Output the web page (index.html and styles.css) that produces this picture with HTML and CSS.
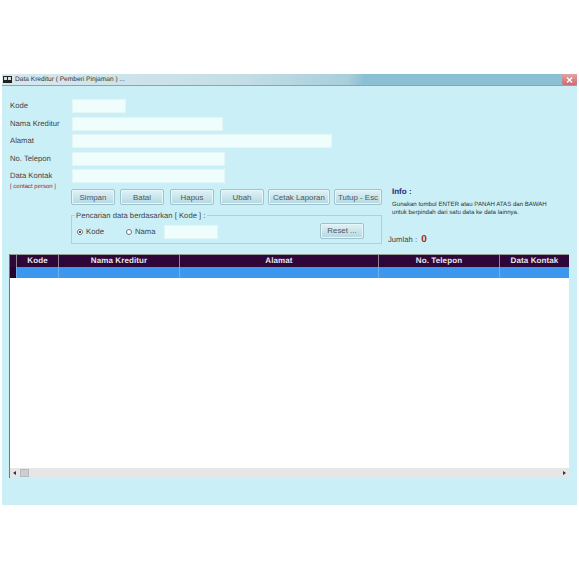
FILE: index.html
```
<!DOCTYPE html>
<html lang="en">

<head>
    <meta charset="UTF-8">
    <title>Data Kreditur</title>
    <link rel="stylesheet" href="styles.css">
</head>

<body>

    <div class="window">
        <div class="titlebar">
            <svg class="app-icon" width="9" height="7" viewBox="0 0 9 7">
                <rect width="9" height="7" fill="#222" />
                <rect x="1" y="1" width="3" height="3" fill="#ddd" />
                <rect x="5" y="1" width="3" height="3" fill="#ddd" />
            </svg>
            <span class="title">Data Kreditur ( Pemberi Pinjaman ) ...</span>
            <div class="close">
                <svg width="7" height="6" viewBox="0 0 7 6">
                    <path d="M1 0.5 L6 5.5 M6 0.5 L1 5.5" stroke="#fff" stroke-width="1.4" />
                </svg>
            </div>
        </div>

        <div class="content">
            <div class="form">
                <div class="row">
                    <label>Kode</label>
                    <div class="input w-kode"></div>
                </div>
                <div class="row">
                    <label>Nama Kreditur</label>
                    <div class="input w-nama"></div>
                </div>
                <div class="row">
                    <label>Alamat</label>
                    <div class="input w-alamat"></div>
                </div>
                <div class="row">
                    <label>No. Telepon</label>
                    <div class="input w-telp"></div>
                </div>
                <div class="row">
                    <label>Data Kontak</label>
                    <div class="input w-telp"></div>
                </div>
                <div class="contact-note">[ contact person ]</div>
            </div>

            <div class="middle">
                <div class="actions">
                    <div class="buttons">
                        <button class="w-44">Simpan</button>
                        <button class="w-44 gap-5">Batal</button>
                        <button class="w-44 gap-6">Hapus</button>
                        <button class="w-44 gap-6">Ubah</button>
                        <button class="w-62 gap-4">Cetak Laporan</button>
                        <button class="w-48 gap-4">Tutup - Esc</button>
                    </div>
                    <fieldset class="search">
                        <legend>Pencarian data berdasarkan [ Kode ] :</legend>
                        <span class="radio checked"></span>
                        <span class="radio-label label-kode">Kode</span>
                        <span class="radio"></span>
                        <span class="radio-label label-nama">Nama</span>
                        <div class="input w-cari"></div>
                        <button class="reset">Reset ...</button>
                    </fieldset>
                </div>
                <div class="info">
                    <div class="info-title">Info :</div>
                    <p>Gunakan tombol ENTER atau PANAH ATAS dan BAWAH<br>untuk berpindah dari satu data ke data lainnya.</p>
                    <div class="jumlah">Jumlah : <span class="count">0</span></div>
                </div>
            </div>

            <div class="grid">
                <div class="grid-head">
                    <div class="c-ind"></div>
                    <div class="c-kode">Kode</div>
                    <div class="c-nama">Nama Kreditur</div>
                    <div class="c-alamat">Alamat</div>
                    <div class="c-telp">No. Telepon</div>
                    <div class="c-kontak">Data Kontak</div>
                </div>
                <div class="grid-row">
                    <div class="c-ind"></div>
                    <div class="c-kode"></div>
                    <div class="c-nama"></div>
                    <div class="c-alamat"></div>
                    <div class="c-telp"></div>
                    <div class="c-kontak"></div>
                </div>
                <div class="grid-body"></div>
                <div class="scrollbar">
                    <span class="arrow left"></span>
                    <span class="thumb"></span>
                    <span class="arrow right"></span>
                </div>
            </div>
        </div>
    </div>

</body>

</html>
```
FILE: styles.css
```
html, body {
    margin: 0;
    padding: 0;
    background-color: #fff;
}

body {
    font-family: 'Liberation Sans', Arial, sans-serif;
    font-size: 7.7px;
    color: #333;
    padding-top: 74px;
    height: 505px;
    overflow: hidden;
    text-rendering: geometricPrecision;
}

.window {
    width: 575px;
    height: 431px;
    margin-left: 2px;
    background-color: #cbeff6;
    display: flex;
    flex-direction: column;
}

.titlebar {
    height: 11px;
    display: flex;
    align-items: center;
    flex: none;
    background: linear-gradient(100deg, #d8e8ec 0%, #c5dfe7 40%, #a9cfdc 60%, #8bbfd3 63%, #8bbfd3 100%);
    border-bottom: 1px solid #7fa9b9;
}

.app-icon {
    margin-left: 1px;
    margin-right: 3px;
}

.title {
    font-size: 6.6px;
    color: #333;
}

.close {
    width: 15px;
    height: 11px;
    margin-left: auto;
    background: linear-gradient(#e3a3a6, #cd6b70);
    border-radius: 0 0 2px 2px;
    display: flex;
    align-items: center;
    justify-content: center;
}

.content {
    flex: 1;
    padding: 13px 8px 0 8px;
}

.form {
    height: 90px;
}

.row {
    display: flex;
    align-items: center;
    height: 14px;
    margin-bottom: 3.5px;
}

.row label {
    width: 62px;
    margin-top: -1px;
    color: #444;
}

.input {
    height: 12px;
    background-color: #f0fdfd;
    border: 1px solid #e2f6f8;
    box-sizing: content-box;
}

.w-kode { width: 52px; }
.w-nama { width: 149px; }
.w-alamat { width: 258px; }
.w-telp { width: 151px; }
.w-cari { width: 52px; margin-left: 8px; }

.contact-note {
    font-size: 6px;
    color: #a52020;
    margin-top: -3px;
}

.middle {
    display: flex;
    height: 60px;
    margin-left: 61px;
}

.actions {
    width: 311px;
}

.buttons {
    display: flex;
}

button {
    font-family: inherit;
    font-size: 7.9px;
    color: #555;
    height: 16px;
    padding: 0;
    border: 1px solid #9fc2cd;
    border-radius: 2px;
    background: linear-gradient(#dff2f6, #b4d8e3);
    box-shadow: inset 0 0 0 1px #e6f6f9;
}

.w-44 { width: 44px; }
.w-62 { width: 62px; }
.w-48 { width: 48px; }
.gap-4 { margin-left: 4px; }
.gap-5 { margin-left: 5px; }
.gap-6 { margin-left: 6px; }

.search {
    margin: 6px 0 0 0;
    padding: 0 0 0 5px;
    height: 33px;
    box-sizing: border-box;
    border: 1px solid #b5cfd6;
    display: flex;
    align-items: center;
    width: 311px;
}

.search legend {
    padding: 0 1px;
    margin-left: -2px;
    color: #444;
}

.radio {
    width: 6px;
    height: 6px;
    border: 1px solid #777;
    border-radius: 50%;
    background-color: #fff;
    box-sizing: border-box;
    position: relative;
}

.radio.checked::after {
    content: "";
    position: absolute;
    left: 1px;
    top: 1px;
    width: 2px;
    height: 2px;
    border-radius: 50%;
    background-color: #222;
}

.radio-label {
    margin-left: 3px;
    color: #444;
}

.label-kode { width: 40px; }
.label-nama { width: 21px; }

.reset {
    width: 44px;
    margin-left: 102px;
    margin-top: -2px;
}

.info {
    margin-left: 6px;
    margin-top: -2px;
}

.info-title {
    font-size: 8px;
    font-weight: bold;
    color: #1c2a7c;
    margin-left: 4px;
}

.info p {
    font-size: 6.1px;
    line-height: 7.5px;
    margin: 5px 0 0 4px;
    color: #333;
    white-space: nowrap;
}

.jumlah {
    margin-top: 18px;
    color: #444;
}

.count {
    font-size: 10px;
    font-weight: bold;
    color: #a81c1c;
    margin-left: 2px;
}

.grid {
    width: 559px;
    height: 224px;
    display: flex;
    flex-direction: column;
    background-color: #fff;
    box-shadow: -1px 0 0 #6d7a80;
    margin-top: 5px;
}

.grid-head {
    display: flex;
    flex: none;
    height: 12px;
    background-color: #2e0638;
    border-top: 1px solid #9a9a9a;
    color: #e8e6ee;
    font-size: 8px;
    font-weight: bold;
    line-height: 12px;
    text-align: center;
    letter-spacing: 0.1px;
}

.grid-head > div {
    border-right: 1px solid #8e8494;
    box-sizing: border-box;
}

.grid-row {
    display: flex;
    flex: none;
    height: 11px;
    background-color: #3c97ef;
}

.grid-row > div {
    border-right: 1px solid #6db0f0;
    box-sizing: border-box;
}

.grid-row .c-ind {
    background-color: #23052c;
}

.c-ind { width: 7px; }
.c-kode { width: 42px; }
.c-nama { width: 121px; }
.c-alamat { width: 199px; }
.c-telp { width: 121px; }
.c-kontak { width: 69px; border-right: none !important; }

.grid-body {
    flex: 1;
}

.scrollbar {
    height: 10px;
    flex: none;
    background-color: #e6e6e6;
    display: flex;
    align-items: center;
    padding: 0 3px;
}

.thumb {
    width: 9px;
    height: 8px;
    margin-left: 4px;
    background-color: #c9cfd2;
    border: 1px solid #b4babd;
    box-sizing: border-box;
}

.arrow {
    width: 0;
    height: 0;
    border-top: 2px solid transparent;
    border-bottom: 2px solid transparent;
}

.arrow.left {
    border-right: 3px solid #333;
}

.arrow.right {
    border-left: 3px solid #333;
    margin-left: auto;
}
```
